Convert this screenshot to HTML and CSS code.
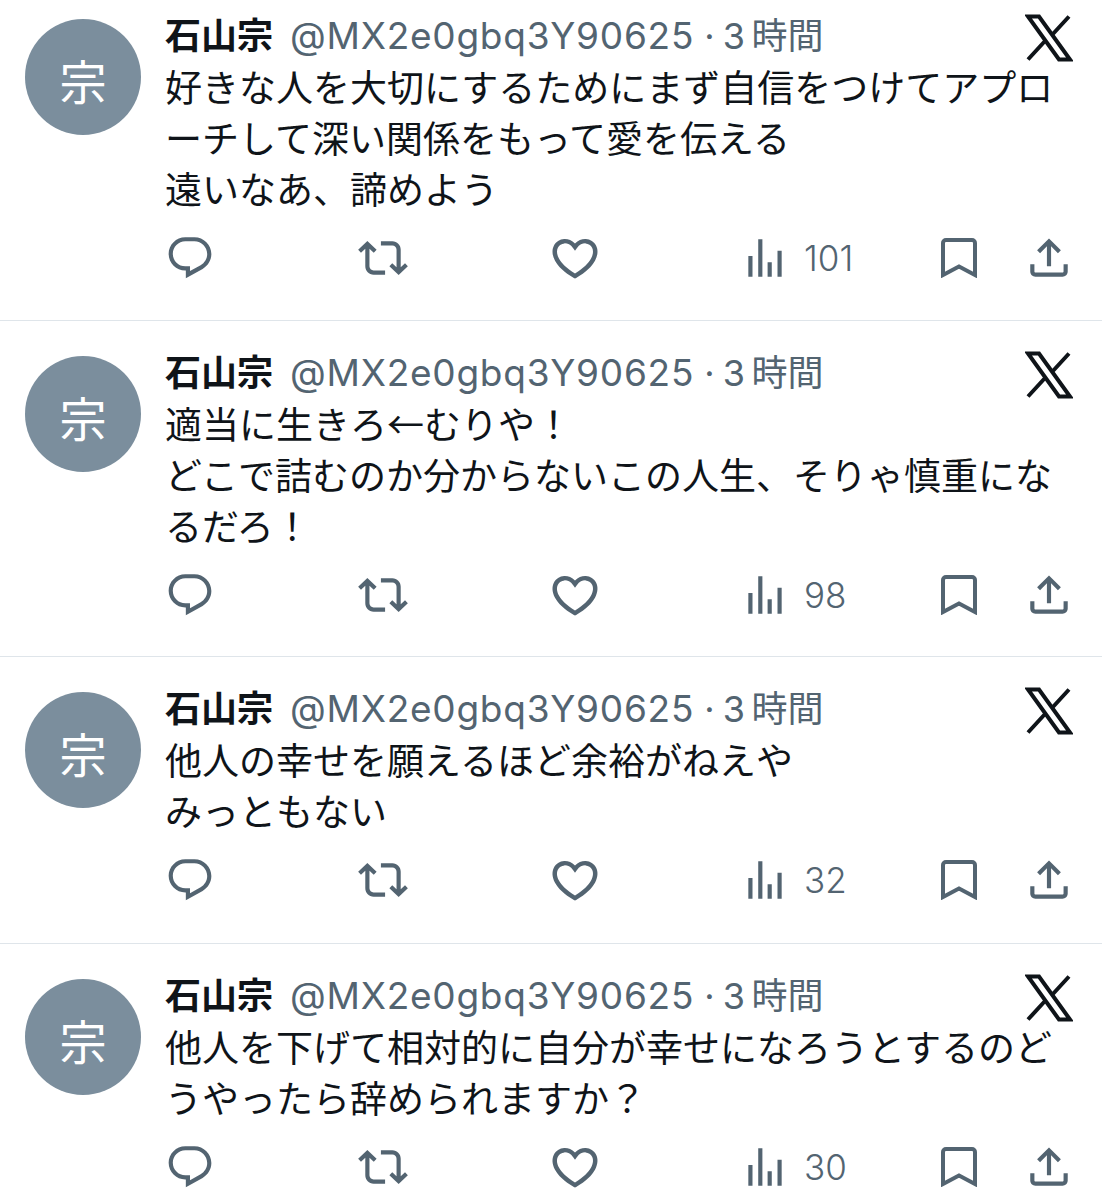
FILE: index.html
```html
<!DOCTYPE html>
<html lang="ja">
  <head>
    <meta charset="utf-8">
    <title>石山宗</title>
    <link rel="stylesheet" href="styles.css">
  </head>
  <body>
    <svg class="sprite" xmlns="http://www.w3.org/2000/svg">
      <symbol id="i-x" viewBox="0 0 48 48"><path class="stroke-x" d="M3 2.5h11l31 43H34zM44 2.5 27 21M20 27 3 45.5"/></symbol>
      <symbol id="i-reply" viewBox="0 0 24 24"><path d="M1.751 10c0-4.42 3.584-8 8.005-8h4.366c4.49 0 8.129 3.64 8.129 8.13 0 2.96-1.607 5.68-4.196 7.11l-8.054 4.46v-3.69h-.067c-4.49.1-8.183-3.51-8.183-8.01zm8.005-6c-3.317 0-6.005 2.69-6.005 6 0 3.37 2.77 6.08 6.138 6.01l.351-.01h1.761v2.3l5.087-2.81c1.951-1.08 3.163-3.13 3.163-5.36 0-3.39-2.744-6.13-6.129-6.13H9.756z"/></symbol>
      <symbol id="i-retweet" viewBox="0 0 24 24"><path d="M4.5 3.88l4.432 4.14-1.364 1.46L5.5 7.55V16c0 1.1.896 2 2 2H13v2H7.5c-2.209 0-4-1.79-4-4V7.55L1.432 9.48.068 8.02 4.5 3.88zM16.5 6H11V4h5.5c2.209 0 4 1.79 4 4v8.45l2.068-1.93 1.364 1.46-4.432 4.14-4.432-4.14 1.364-1.46 2.068 1.93V8c0-1.1-.896-2-2-2z"/></symbol>
      <symbol id="i-like" viewBox="0 0 24 24"><path d="M16.697 5.5c-1.222-.06-2.679.51-3.89 2.16l-.805 1.09-.806-1.09C9.984 6.01 8.526 5.44 7.304 5.5c-1.243.07-2.349.78-2.91 1.91-.552 1.12-.633 2.78.479 4.82 1.074 1.97 3.257 4.27 7.129 6.61 3.87-2.34 6.052-4.64 7.126-6.61 1.111-2.04 1.03-3.7.477-4.82-.561-1.13-1.666-1.84-2.908-1.91zm4.187 7.69c-1.351 2.48-4.001 5.12-8.379 7.67l-.503.3-.504-.3c-4.379-2.55-7.029-5.19-8.382-7.67-1.36-2.5-1.41-4.86-.514-6.67.887-1.79 2.647-2.91 4.601-3.01 1.651-.09 3.368.56 4.798 2.01 1.429-1.45 3.146-2.1 4.796-2.01 1.954.1 3.714 1.22 4.601 3.01.896 1.81.846 4.17-.514 6.67z"/></symbol>
      <symbol id="i-views" viewBox="0 0 24 24"><path d="M8.75 21V3h2v18h-2zM18 21V8.5h2V21h-2zM4 21l.004-10h2L6 21H4zm9.248 0v-7h2v7h-2z"/></symbol>
      <symbol id="i-bookmark" viewBox="0 0 36 40"><path class="stroke" d="M2 37V5a3 3 0 0 1 3-3h26a3 3 0 0 1 3 3v32l-16-8.5z"/></symbol>
      <symbol id="i-share" viewBox="0 0 24 24"><path d="M12 2.59l5.7 5.7-1.41 1.42L13 6.41V16h-2V6.41l-3.3 3.3-1.41-1.42L12 2.59zM21 15l-.02 3.51c0 1.38-1.12 2.49-2.5 2.49H5.5C4.11 21 3 19.88 3 18.5V15h2v3.5c0 .28.22.5.5.5h12.98c.28 0 .5-.22.5-.5L19 15h2z"/></symbol>
    </svg>

    <article class="post post-first">
      <div class="avatar">宗</div>
      <div class="main">
        <div class="head">
          <span class="name">石山宗</span>
          <span class="handle">@MX2e0gbq3Y90625</span>
          <span class="time">· 3&#8201;時間</span>
          <svg class="logo"><use href="#i-x"/></svg>
        </div>
        <p class="text">好きな人を大切にするためにまず自信をつけてアプロ<br>ーチして深い関係をもって愛を伝える<br>遠いなあ、諦めよう</p>
        <div class="actions">
          <span class="act act-reply"><svg class="ico"><use href="#i-reply"/></svg></span>
          <span class="act act-retweet"><svg class="ico"><use href="#i-retweet"/></svg></span>
          <span class="act act-like"><svg class="ico ico-like"><use href="#i-like"/></svg></span>
          <span class="act act-views"><svg class="ico"><use href="#i-views"/></svg><span class="count">101</span></span>
          <span class="act act-bookmark"><svg class="ico ico-bookmark"><use href="#i-bookmark"/></svg></span>
          <span class="act act-share"><svg class="ico"><use href="#i-share"/></svg></span>
        </div>
      </div>
    </article>

    <article class="post post-second">
      <div class="avatar">宗</div>
      <div class="main">
        <div class="head">
          <span class="name">石山宗</span>
          <span class="handle">@MX2e0gbq3Y90625</span>
          <span class="time">· 3&#8201;時間</span>
          <svg class="logo"><use href="#i-x"/></svg>
        </div>
        <p class="text">適当に生きろ←むりや！<br>どこで詰むのか分からないこの人生、そりゃ慎重にな<br>るだろ！</p>
        <div class="actions">
          <span class="act act-reply"><svg class="ico"><use href="#i-reply"/></svg></span>
          <span class="act act-retweet"><svg class="ico"><use href="#i-retweet"/></svg></span>
          <span class="act act-like"><svg class="ico ico-like"><use href="#i-like"/></svg></span>
          <span class="act act-views"><svg class="ico"><use href="#i-views"/></svg><span class="count">98</span></span>
          <span class="act act-bookmark"><svg class="ico ico-bookmark"><use href="#i-bookmark"/></svg></span>
          <span class="act act-share"><svg class="ico"><use href="#i-share"/></svg></span>
        </div>
      </div>
    </article>

    <article class="post post-third">
      <div class="avatar">宗</div>
      <div class="main">
        <div class="head">
          <span class="name">石山宗</span>
          <span class="handle">@MX2e0gbq3Y90625</span>
          <span class="time">· 3&#8201;時間</span>
          <svg class="logo"><use href="#i-x"/></svg>
        </div>
        <p class="text">他人の幸せを願えるほど余裕がねえや<br>みっともない</p>
        <div class="actions">
          <span class="act act-reply"><svg class="ico"><use href="#i-reply"/></svg></span>
          <span class="act act-retweet"><svg class="ico"><use href="#i-retweet"/></svg></span>
          <span class="act act-like"><svg class="ico ico-like"><use href="#i-like"/></svg></span>
          <span class="act act-views"><svg class="ico"><use href="#i-views"/></svg><span class="count">32</span></span>
          <span class="act act-bookmark"><svg class="ico ico-bookmark"><use href="#i-bookmark"/></svg></span>
          <span class="act act-share"><svg class="ico"><use href="#i-share"/></svg></span>
        </div>
      </div>
    </article>

    <article class="post post-last">
      <div class="avatar">宗</div>
      <div class="main">
        <div class="head">
          <span class="name">石山宗</span>
          <span class="handle">@MX2e0gbq3Y90625</span>
          <span class="time">· 3&#8201;時間</span>
          <svg class="logo"><use href="#i-x"/></svg>
        </div>
        <p class="text">他人を下げて相対的に自分が幸せになろうとするのど<br>うやったら辞められますか？</p>
        <div class="actions">
          <span class="act act-reply"><svg class="ico"><use href="#i-reply"/></svg></span>
          <span class="act act-retweet"><svg class="ico"><use href="#i-retweet"/></svg></span>
          <span class="act act-like"><svg class="ico ico-like"><use href="#i-like"/></svg></span>
          <span class="act act-views"><svg class="ico"><use href="#i-views"/></svg><span class="count">30</span></span>
          <span class="act act-bookmark"><svg class="ico ico-bookmark"><use href="#i-bookmark"/></svg></span>
          <span class="act act-share"><svg class="ico"><use href="#i-share"/></svg></span>
        </div>
      </div>
    </article>
  </body>
</html>
```

FILE: styles.css
```css
body {
  margin: 0;
  background: #fff;
  color: #0f1419;
  font-family: "Noto Sans CJK JP", "Noto Sans", sans-serif;
  overflow: hidden;
}

.sprite { display: none; }

.post {
  display: flex;
  gap: 24px;
  padding: 25px 0 36px 25px;
  border-bottom: 1px solid #dfe5ea;
}
.post-first { padding-top: 9px; }
.post-second { padding-bottom: 35px; }
.post-third { padding-bottom: 37px; }
.post-last { padding-bottom: 0; border-bottom: none; }

.avatar {
  flex: none;
  width: 116px;
  height: 116px;
  margin-top: 10px;
  border-radius: 50%;
  background: #7b8e9d;
  color: #fff;
  font-size: 47px;
  line-height: 122px;
  text-align: center;
}

.main { flex: 1; min-width: 0; }

.head {
  display: flex;
  align-items: center;
  height: 52px;
  white-space: nowrap;
}

.name { margin-top: -4px; font-size: 36px; font-weight: 700; }
.handle {
  margin-left: 17px;
  color: #536471;
  font-family: Inter, "Noto Sans CJK JP", sans-serif;
  font-size: 37px;
  letter-spacing: 0.75px;
}
.time {
  margin: -5px 0 0 10px;
  color: #536471;
  font-family: Inter, "Noto Sans CJK JP", sans-serif;
  font-size: 36px;
  word-spacing: -2px;
}
.logo {
  flex: none;
  width: 48px;
  height: 48px;
  margin: 5px 29px 0 auto;
}
.stroke-x { fill: none; stroke: #0f1419; stroke-width: 4; }

.text {
  margin: 0;
  font-size: 37px;
  line-height: 51px;
  white-space: nowrap;
}

.actions {
  display: flex;
  align-items: center;
  height: 52px;
  margin-top: 18px;
  color: #536471;
}
.act { display: flex; align-items: center; flex: none; }
.act-reply { width: 193px; }
.act-retweet { width: 190px; }
.act-like { width: 192px; }
.act-views { width: 201px; }
.act-bookmark { width: 83px; }

.ico { width: 50px; height: 50px; fill: #536471; }
.ico-like { width: 54px; height: 54px; }
.ico-bookmark { width: 36px; height: 40px; }
.stroke { fill: none; stroke: #536471; stroke-width: 4; }
.count {
  margin-left: 14px;
  font-family: Inter, sans-serif;
  font-size: 35px;
  font-weight: 300;
}
```
